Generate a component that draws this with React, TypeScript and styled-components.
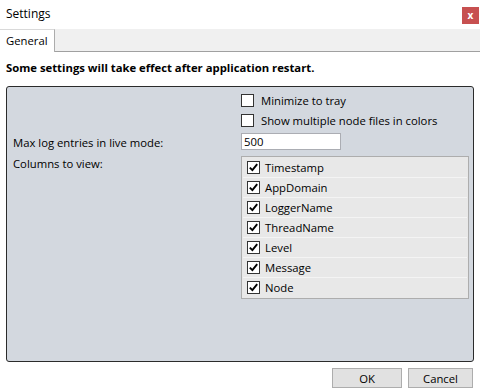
import styled, { createGlobalStyle } from "styled-components";

const GlobalStyle = createGlobalStyle`
  html, body {
    margin: 0;
    padding: 0;
    background: #ffffff;
  }
  * {
    box-sizing: border-box;
  }
`;

const Window = styled.div`
  width: 480px;
  height: 389px;
  background: #ffffff;
  font-family: "Segoe UI", "Open Sans", sans-serif;
  font-size: 11.3px;
  color: #000000;
  display: flex;
  flex-direction: column;
  overflow: hidden;
`;

const TitleBar = styled.div`
  height: 29px;
  display: flex;
  align-items: center;
  justify-content: space-between;
  padding: 0 1px 3px 6px;
  font-size: 12px;
`;

const CloseButton = styled.div`
  width: 17px;
  height: 17px;
  background: #c75050;
  color: #ffffff;
  font-weight: bold;
  font-size: 10px;
  display: flex;
  align-items: center;
  justify-content: center;
  margin-top: 4px;
`;

const TabStrip = styled.div`
  height: 23px;
  background: #f0f0f0;
  border-bottom: 1px solid #a0a0a0;
  display: flex;
`;

const Tab = styled.div<{ active?: boolean }>`
  width: 55px;
  height: 23px;
  padding: 0 0 1px 6px;
  display: flex;
  align-items: center;
  background: ${(p) => (p.active ? "#ffffff" : "transparent")};
  border-right: 1px solid #acacac;
  border-top: 1px solid #d9d9d9;
  margin-bottom: -1px;
`;

const Body = styled.div`
  flex: 1;
  display: flex;
  flex-direction: column;
  padding: 0 6px;
`;

const Notice = styled.div`
  height: 34px;
  display: flex;
  align-items: center;
  font-weight: bold;
  padding-bottom: 3px;
`;

const Panel = styled.div`
  height: 276px;
  background: #d3d8df;
  border: 1px solid #2b2b2b;
  border-radius: 3px;
  padding: 3px 4px 0 5px;
  display: grid;
  grid-template-columns: 1fr 228px;
  grid-auto-rows: min-content;
`;

const Label = styled.div<{ top?: number }>`
  padding-left: 1px;
  padding-top: ${(p) => p.top ?? 0}px;
  display: flex;
  align-items: ${(p) => (p.top ? "flex-start" : "center")};
`;

const CheckRow = styled.label`
  height: 20px;
  display: flex;
  align-items: center;
  gap: 7px;
`;

const Box = styled.span`
  width: 13px;
  height: 13px;
  flex: none;
  border: 1px solid #333333;
  background: #ffffff;
  display: flex;
  align-items: center;
  justify-content: center;
`;

const NumberInput = styled.div`
  width: 100px;
  height: 17px;
  margin: 3px 0 5px 0;
  border: 1px solid #abadb3;
  background: #ffffff;
  padding-left: 2px;
  display: flex;
  align-items: center;
`;

const ColumnList = styled.div`
  border: 1px solid #adadad;
  background: #e8e8e8;
  padding: 1px;
  display: flex;
  flex-direction: column;
  margin-top: 1px;
`;

const ColumnItem = styled.div`
  height: 20px;
  display: flex;
  align-items: center;
  gap: 5px;
  padding: 0 0 1px 4px;
  border-bottom: 1px solid #f4f4f4;
  &:last-child {
    border-bottom: none;
    height: 19px;
  }
`;

const Footer = styled.div`
  display: flex;
  justify-content: flex-end;
  gap: 6px;
  padding: 6px 1px 0 0;
`;

const Button = styled.button<{ w: number }>`
  width: ${(p) => p.w}px;
  height: 20px;
  background: #e1e1e1;
  border: 1px solid #adadad;
  font-family: inherit;
  font-size: 11.3px;
  color: #000000;
  padding: 0;
`;

function Check({ checked }: { checked?: boolean }) {
  return (
    <Box>
      {checked && (
        <svg width="9" height="9" viewBox="0 0 9 9">
          <path d="M0.8 4.6 L3.4 7.2 L8.2 1.2" fill="none" stroke="#000" strokeWidth="1.9" />
        </svg>
      )}
    </Box>
  );
}

const columns = ["Timestamp", "AppDomain", "LoggerName", "ThreadName", "Level", "Message", "Node"];

export default function App() {
  return (
    <Window>
      <GlobalStyle />
      <TitleBar>
        <span>Settings</span>
        <CloseButton>x</CloseButton>
      </TitleBar>
      <TabStrip>
        <Tab active>General</Tab>
      </TabStrip>
      <Body>
        <Notice>Some settings will take effect after application restart.</Notice>
        <Panel>
          <div />
          <CheckRow>
            <Check />
            Minimize to tray
          </CheckRow>
          <div />
          <CheckRow>
            <Check />
            Show multiple node files in colors
          </CheckRow>
          <Label>Max log entries in live mode:</Label>
          <NumberInput>500</NumberInput>
          <Label top={1}>Columns to view:</Label>
          <ColumnList>
            {columns.map((c) => (
              <ColumnItem key={c}>
                <Check checked />
                {c}
              </ColumnItem>
            ))}
          </ColumnList>
        </Panel>
        <Footer>
          <Button w={70}>OK</Button>
          <Button w={65}>Cancel</Button>
        </Footer>
      </Body>
    </Window>
  );
}
